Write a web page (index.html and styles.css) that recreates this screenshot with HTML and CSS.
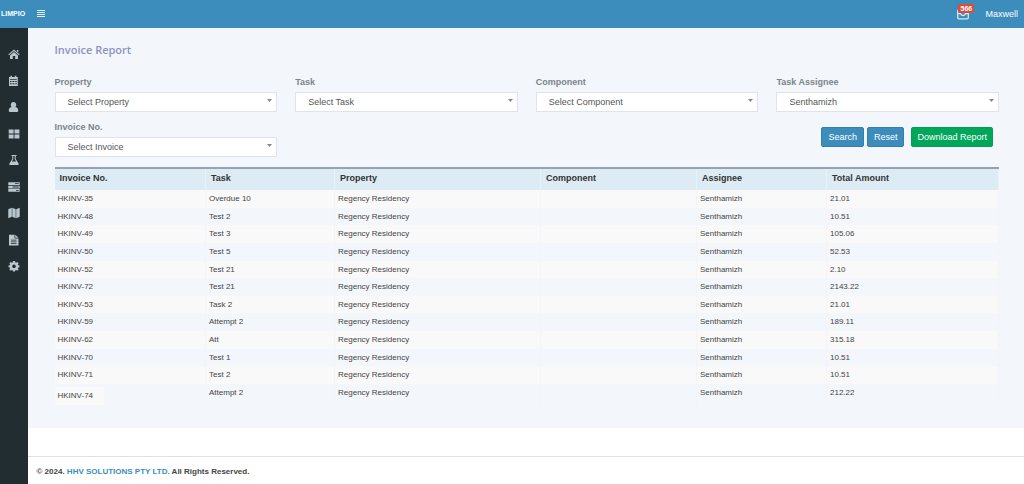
FILE: index.html
```html
<!DOCTYPE html>
<html lang="en">
<head>
<meta charset="utf-8">
<meta name="viewport" content="width=device-width, initial-scale=1">
<title>Invoice Report</title>
<link rel="stylesheet" href="styles.css">
</head>
<body>
<header class="topbar">
  <a class="brand" href="#">LIMPIO</a>
  <button class="menu-toggle" type="button" aria-label="Toggle menu">
    <svg width="8" height="8" viewBox="0 0 8 8"><path d="M0 .5h8M0 2.500h8M0 4.500h8M0 6.500h8" stroke="currentColor" stroke-width="1.200"/></svg>
  </button>
  <a class="inbox" href="#" aria-label="Messages">
    <svg width="12" height="12" viewBox="0 0 12 12" fill="none" stroke="currentColor" stroke-width="1.3"><rect x=".7" y="2" width="10.600" height="8.800" rx="1"/><path d="M1 5.600h2.400Q6 9.600 8.600 5.600H11"/></svg>
    <span class="badge">566</span>
  </a>
  <a class="user" href="#">Maxwell</a>
</header>
<div class="shell">
  <nav class="sidebar">
    <div class="menu">
    <a href="#" aria-label="Home"><svg viewBox="0 0 12 12"><path d="M6 1.6 11.7 6.5l-.7.8L6 3.1 1 7.3l-.7-.8zM8.9 2h1.4v2.6L8.9 3.4zM6 4l4 3.4V11H7.2V8H4.8v3H2V7.400z"/></svg></a>
    <a href="#" aria-label="Calendar"><svg viewBox="0 0 12 12"><path fill-rule="evenodd" d="M1 2h1.500V.8H4V2h2.800V.8h1.500V2h1.500v9H1zM2 4.200v.8h6.800v-.8zM2 6v1h1.600V6zm2.500 0v1h1.800V6zm2.700 0v1h1.600V6zM2 8.300v1h1.600v-1zm2.500 0v1h1.800v-1zm2.700 0v1h1.600v-1z"/></svg></a>
    <a href="#" aria-label="Users"><svg viewBox="0 0 12 12"><path d="M5.500 1a2.600 2.800 0 0 1 1.900 4.900C9.500 6.300 10.200 7.800 10.200 9.400c0 1-.6 1.600-1.500 1.600H2.300C1.400 11 .8 10.400.8 9.400.8 7.800 1.500 6.300 3.600 5.900A2.600 2.800 0 0 1 5.500 1z"/></svg></a>
    <a href="#" aria-label="Dashboard"><svg viewBox="0 0 12 12"><path d="M.7 1.600h4.900v4H.7zM6.500 1.600h4.900v4H6.500zM.7 6.500h4.900v4H.7zM6.500 6.500h4.900v4H6.500z"/></svg></a>
    <a href="#" aria-label="Tests"><svg viewBox="0 0 12 12"><path fill-rule="evenodd" d="M3.500 1h5v1h-.8v3l3 4.800c.4.700 0 1.200-.7 1.200H2c-.7 0-1.100-.5-.7-1.200l3-4.800V2h-.8zm1.800 1v3.300L3.900 7.500h4.200L6.700 5.300V2z"/></svg></a>
    <a href="#" aria-label="Tasks"><svg viewBox="0 0 12 12"><path fill-rule="evenodd" d="M.3 1.300h11.400v2.700H.3zM.3 4.700h11.400v2.700H.3zM.3 8.100h11.400v2.700H.3zM7 2.200v.8h3.700v-.8zM4.500 5.600v.8h6.200v-.8zM8 9v.8h2.700V9z"/></svg></a>
    <a href="#" aria-label="Map"><svg viewBox="0 0 12 12"><path d="M.3 2.200 3.800.8v9L.3 11.300zM4.300.8 7.700 2.200v9L4.300 9.800zM8.200 2.200 11.700.8v9L8.200 11.200z"/></svg></a>
    <a href="#" aria-label="Reports"><svg viewBox="0 0 12 12"><path fill-rule="evenodd" d="M1 .8h5.500v3.700h4V11.400H1zM7.200.8l3.300 3H7.200zM3 5.800v.8h5.500v-.8zm0 1.700v.8h5.500v-.8zm0 1.700v.8h5.500v-.8z"/></svg></a>
    <a href="#" aria-label="Settings"><svg viewBox="0 0 12 12"><path fill-rule="evenodd" d="M5 1h2l.3 1.400.8.3 1.200-.7L10.600 3.300 9.900 4.500l.3.800L11.500 5.500v1.800l-1.300.2-.3.800.7 1.200L9.300 10.700 8.100 10l-.8.300L7 11.500H5L4.700 10.300 3.900 10l-1.200.7L1.400 9.500l.7-1.200-.3-.8L.5 7.300V5.500l1.300-.2.300-.8L1.400 3.300 2.700 2l1.200.7.800-.3zM6 4.500a1.800 1.800 0 1 0 .01 0z"/></svg></a>
    </div>
  </nav>
  <div class="page">
    <main class="content">
      <h1>Invoice Report</h1>
      <form class="filters">
        <div class="field"><label for="property">Property</label><select id="property"><option>Select Property</option></select></div>
        <div class="field"><label for="task">Task</label><select id="task"><option>Select Task</option></select></div>
        <div class="field"><label for="component">Component</label><select id="component"><option>Select Component</option></select></div>
        <div class="field"><label for="assignee">Task Assignee</label><select id="assignee"><option>Senthamizh</option></select></div>
        <div class="field"><label for="invoice">Invoice No.</label><select id="invoice"><option>Select Invoice</option></select></div>
        <div class="actions">
          <button class="btn" type="button">Search</button>
          <button class="btn" type="reset">Reset</button>
          <button class="btn btn-download" type="button">Download Report</button>
        </div>
      </form>
      <table class="report">
        <colgroup><col class="c-invoice"><col class="c-task"><col class="c-property"><col class="c-component"><col class="c-assignee"><col class="c-total"></colgroup>
        <thead><tr><th>Invoice No.</th><th>Task</th><th>Property</th><th>Component</th><th>Assignee</th><th>Total Amount</th></tr></thead>
        <tbody>
          <tr><td>HKINV-35</td><td>Overdue 10</td><td>Regency Residency</td><td></td><td>Senthamizh</td><td>21.01</td></tr>
          <tr><td>HKINV-48</td><td>Test 2</td><td>Regency Residency</td><td></td><td>Senthamizh</td><td>10.51</td></tr>
          <tr><td>HKINV-49</td><td>Test 3</td><td>Regency Residency</td><td></td><td>Senthamizh</td><td>105.06</td></tr>
          <tr><td>HKINV-50</td><td>Test 5</td><td>Regency Residency</td><td></td><td>Senthamizh</td><td>52.53</td></tr>
          <tr><td>HKINV-52</td><td>Test 21</td><td>Regency Residency</td><td></td><td>Senthamizh</td><td>2.10</td></tr>
          <tr><td>HKINV-72</td><td>Test 21</td><td>Regency Residency</td><td></td><td>Senthamizh</td><td>2143.22</td></tr>
          <tr><td>HKINV-53</td><td>Task 2</td><td>Regency Residency</td><td></td><td>Senthamizh</td><td>21.01</td></tr>
          <tr><td>HKINV-59</td><td>Attempt 2</td><td>Regency Residency</td><td></td><td>Senthamizh</td><td>189.11</td></tr>
          <tr><td>HKINV-62</td><td>Att</td><td>Regency Residency</td><td></td><td>Senthamizh</td><td>315.18</td></tr>
          <tr><td>HKINV-70</td><td>Test 1</td><td>Regency Residency</td><td></td><td>Senthamizh</td><td>10.51</td></tr>
          <tr><td>HKINV-71</td><td>Test 2</td><td>Regency Residency</td><td></td><td>Senthamizh</td><td>10.51</td></tr>
          <tr><td class="tagged"><span class="tag">HKINV-74</span></td><td>Attempt 2</td><td>Regency Residency</td><td></td><td>Senthamizh</td><td>212.22</td></tr>
        </tbody>
      </table>
    </main>
    <footer class="footer">© 2024. <a href="#">HHV SOLUTIONS PTY LTD.</a> All Rights Reserved.</footer>
  </div>
</div>
</body>
</html>
```
FILE: styles.css
```css
* { box-sizing: border-box; }
body {
  margin: 0;
  min-height: 100vh;
  display: flex;
  flex-direction: column;
  background: #fff;
  color: #444;
  font: 9px/12px "Liberation Sans", Arial, sans-serif;
}
a { color: inherit; text-decoration: none; }
.topbar {
  display: flex;
  align-items: center;
  height: 28px;
  padding: 0 6px 1px 1px;
  background: #3c8dbc;
  color: #fff;
}
.brand { width: 36px; font-size: 7px; font-weight: bold; }
.menu-toggle {
  display: flex;
  padding: 1px 0 0;
  border: 0;
  background: none;
  color: #e4f0f7;
}
.inbox { position: relative; display: flex; margin-left: auto; margin-right: 16px; color: #d5e7f2; }
.badge {
  position: absolute;
  top: -4px;
  left: 1px;
  padding: 0 2px;
  border-radius: 2px;
  background: #dd4b39;
  color: #fff;
  font-size: 7px;
  font-weight: bold;
  line-height: 9px;
}
.shell { display: flex; flex: 1; }
.sidebar { width: 28px; padding-top: 20px; background: #222d32; }
.menu {
  display: flex;
  flex-direction: column;
  align-items: center;
  justify-content: space-between;
  height: 224px;
}
.menu a { display: flex; color: #b8c7ce; }
.menu svg { width: 12px; height: 12px; fill: currentColor; }
.page { display: flex; flex: 1; flex-direction: column; }
.content { padding: 14px 25px 22px 27px; background: #f3f6fb; }
h1 {
  margin: 0 0 18px;
  color: #9092c0;
  font: 600 11px/16px "Open Sans", "Noto Sans", sans-serif;
}
.filters { display: grid; grid-template-columns: repeat(4, 1fr); gap: 9px 18px; }
.field { display: flex; flex-direction: column; gap: 4px; }
label { color: #7c848c; font-weight: bold; }
select {
  appearance: none;
  width: 100%;
  height: 20px;
  padding: 0 12px;
  border: 1px solid #dfe3ea;
  border-radius: 0;
  background: #fff url("data:image/svg+xml,%3Csvg xmlns='http://www.w3.org/2000/svg' width='5' height='3'%3E%3Cpath d='M0 0h5L2.5 3z' fill='%23888'/%3E%3C/svg%3E") no-repeat right 4px top 6px;
  color: #555;
  font: inherit;
}
.actions {
  grid-column: 2 / -1;
  display: flex;
  align-items: center;
  justify-content: flex-end;
  gap: 3px;
  padding: 0 6px 4px 0;
}
.btn {
  height: 20px;
  padding: 0 6px;
  border: 1px solid #367fa9;
  border-radius: 2px;
  background: #3c8dbc;
  color: #fff;
  font: inherit;
}
.btn-download { margin-left: 4px; padding: 0 5px; border-color: #00a157; background: #00a65a; }
.report {
  width: 100%;
  height: 239px;
  margin-top: 10px;
  border-collapse: collapse;
  border-top: 2px solid #94a3ad;
  table-layout: fixed;
  font-size: 8px;
}
.c-invoice { width: 151px; }
.c-task { width: 129px; }
.c-property { width: 206px; }
.c-component { width: 156px; }
.c-assignee { width: 130px; }
.c-total { width: 172px; }
th {
  height: 22px;
  padding: 0 5px 3px;
  border-right: 1px solid #e8f1f6;
  background: #dcebf4;
  color: #333;
  font-size: 9px;
  text-align: left;
}
td { padding: 3px 3px 2px; border-right: 1px solid #f2f4f8; vertical-align: top; }
tbody tr:nth-child(odd) { background: #f9f9f9; }
.tagged { padding: 3px 0 0; }
.tag { display: inline-block; padding: 3px 11px 3px 3px; background: #f9f9f9; }
.footer {
  margin-top: 28px;
  padding: 9px;
  border-top: 1px solid #dcdfe6;
  font-size: 8px;
  font-weight: bold;
}
.footer a { color: #3c8dbc; }
```
